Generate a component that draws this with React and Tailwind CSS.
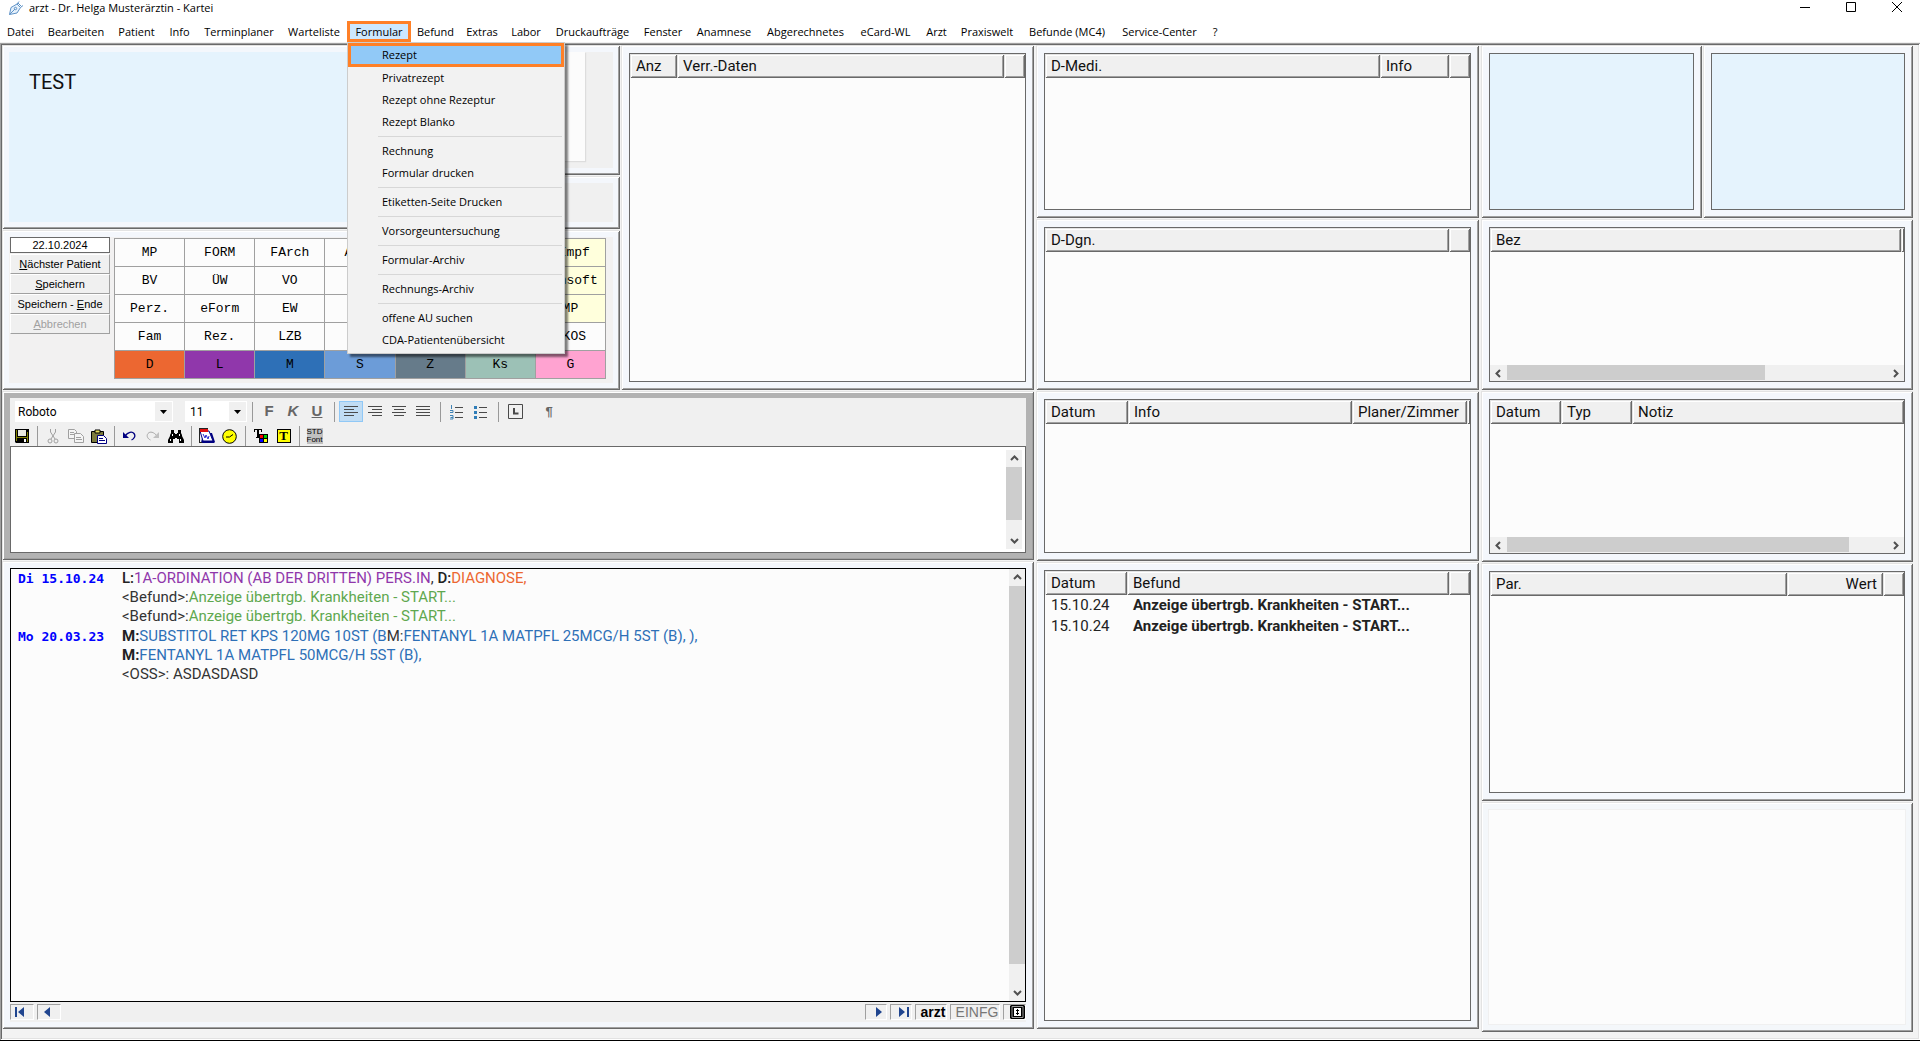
import React, { useState } from "react";
import clsx from "clsx";

// ===== Data =====
const MENU = [
  { label: "Datei", width: "w-[41px]" },
  { label: "Bearbeiten", width: "w-[70px]" },
  { label: "Patient", width: "w-[51px]" },
  { label: "Info", width: "w-[35px]" },
  { label: "Terminplaner", width: "w-[84px]" },
  { label: "Warteliste", width: "w-[66px]" },
  { label: "Formular", width: "w-[64px]" },
  { label: "Befund", width: "w-[49px]" },
  { label: "Extras", width: "w-[44px]" },
  { label: "Labor", width: "w-[44px]" },
  { label: "Druckaufträge", width: "w-[89px]" },
  { label: "Fenster", width: "w-[52px]" },
  { label: "Anamnese", width: "w-[70px]" },
  { label: "Abgerechnetes", width: "w-[93px]" },
  { label: "eCard-WL", width: "w-[67px]" },
  { label: "Arzt", width: "w-[35px]" },
  { label: "Praxiswelt", width: "w-[66px]" },
  { label: "Befunde (MC4)", width: "w-[94px]" },
  { label: "Service-Center", width: "w-[91px]" },
  { label: "?", width: "w-[20px]" },
];

const FORMULAR_GROUPS = [
  ["Rezept", "Privatrezept", "Rezept ohne Rezeptur", "Rezept Blanko"],
  ["Rechnung", "Formular drucken"],
  ["Etiketten-Seite Drucken"],
  ["Vorsorgeuntersuchung"],
  ["Formular-Archiv"],
  ["Rechnungs-Archiv"],
  ["offene AU suchen", "CDA-Patientenübersicht"],
];

const SHORTCUTS = [
  ["MP", "FORM", "FArch", "ARCH", "", "", "eImpf"],
  ["BV", "ÜW", "VO", "", "", "", "Linsoft"],
  ["Perz.", "eForm", "EW", "", "", "", "MP"],
  ["Fam", "Rez.", "LZB", "", "", "", "eKOS"],
];

const CATEGORIES = [
  { label: "D", color: "bg-[#ec6731]" },
  { label: "L", color: "bg-[#9037ab]" },
  { label: "M", color: "bg-[#2e70b7]" },
  { label: "S", color: "bg-[#6c9cd8]" },
  { label: "Z", color: "bg-[#667b8a]" },
  { label: "Ks", color: "bg-[#9cc1b6]" },
  { label: "G", color: "bg-[#ffa3d1]" },
];

const ENTRIES = [
  {
    date: "Di 15.10.24",
    lines: [
      [
        { text: "L:", style: "font-medium text-[#222]" },
        { text: "1A-ORDINATION (AB DER DRITTEN) PERS.IN", style: "text-[#9037ab]" },
        { text: ", " },
        { text: "D:", style: "font-medium text-[#222]" },
        { text: "DIAGNOSE,", style: "text-[#ec6731]" },
      ],
      [
        { text: "<Befund>:" },
        { text: "Anzeige übertrgb. Krankheiten - START...", style: "text-[#5fa84f]" },
      ],
      [
        { text: "<Befund>:" },
        { text: "Anzeige übertrgb. Krankheiten - START...", style: "text-[#5fa84f]" },
      ],
    ],
  },
  {
    date: "Mo 20.03.23",
    lines: [
      [
        { text: "M:", style: "font-bold text-[#222]" },
        { text: "SUBSTITOL RET KPS 120MG 10ST (B", style: "text-[#2e70b7]" },
        { text: "M:" },
        { text: "FENTANYL 1A MATPFL 25MCG/H 5ST (B), ),", style: "text-[#2e70b7]" },
      ],
      [
        { text: "M:", style: "font-bold text-[#222]" },
        { text: "FENTANYL 1A MATPFL 50MCG/H 5ST (B),", style: "text-[#2e70b7]" },
      ],
      [{ text: "<OSS>: ASDASDASD" }],
    ],
  },
];

// ===== Building blocks =====
const BEVEL =
  "shadow-[inset_1px_1px_0_#e3e3e3,inset_-1px_-1px_0_#696969,inset_2px_2px_0_#fff,inset_-2px_-2px_0_#a0a0a0]";

function Panel({ children, className = "bg-[#f4f7fc] p-2" }) {
  return (
    <section className={clsx("flex min-h-0 min-w-0 flex-col", BEVEL, className)}>
      {children}
    </section>
  );
}

function Arrow({ dir }) {
  const d = {
    up: "M1 6 4.5 2.5 8 6",
    down: "M1 3 4.5 6.5 8 3",
    left: "M6 1 2.5 4.5 6 8",
    right: "M3 1 6.5 4.5 3 8",
  }[dir];
  return (
    <svg width="9" height="9" viewBox="0 0 9 9" fill="none" stroke="#505050" strokeWidth="2">
      <path d={d} />
    </svg>
  );
}

// size = share of the track that the thumb takes, in percent
function VScroll({ size }) {
  return (
    <div className="flex w-4 shrink-0 flex-col bg-[#f0f0f0]">
      <button aria-label="Nach oben" className="flex h-[17px] items-center justify-center">
        <Arrow dir="up" />
      </button>
      <div className="min-h-0 flex-1">
        <div className="bg-[#cdcdcd]" style={{ height: `${size}%` }}></div>
      </div>
      <button aria-label="Nach unten" className="flex h-[17px] items-center justify-center">
        <Arrow dir="down" />
      </button>
    </div>
  );
}

function HScroll({ size }) {
  return (
    <div className="flex h-4 shrink-0 bg-[#f0f0f0]">
      <button aria-label="Nach links" className="flex w-[17px] items-center justify-center">
        <Arrow dir="left" />
      </button>
      <div className="min-w-0 flex-1">
        <div className="h-[15px] bg-[#cdcdcd]" style={{ width: `${size}%` }}></div>
      </div>
      <button aria-label="Nach rechts" className="flex w-[17px] items-center justify-center">
        <Arrow dir="right" />
      </button>
    </div>
  );
}

function ListTable({ columns, rows = [], scroll }) {
  return (
    <div className="flex min-h-0 flex-1 flex-col overflow-hidden border border-[#696969] bg-[#fcfcfc]">
      <table className="w-full table-fixed border-collapse text-[15px] text-[#111]">
        <thead>
          <tr className="h-6 bg-[#f0f0f0]">
            {columns.map((c, i) => (
              <th
                key={i}
                className={clsx(
                  "py-0 leading-[22px] font-normal whitespace-nowrap",
                  BEVEL,
                  c.label ? "px-1.5" : "px-0",
                  c.right ? "text-right" : "text-left",
                  c.width
                )}
              >
                {c.label}
              </th>
            ))}
          </tr>
        </thead>
        <tbody>
          {rows.map((row, i) => (
            <tr key={i} className="h-[21px] text-[#222]">
              <td className="px-1.5 py-0 leading-[21px]">{row[0]}</td>
              <td className="px-1.5 py-0 leading-[21px] font-bold whitespace-nowrap">
                {row[1]}
              </td>
              <td></td>
            </tr>
          ))}
        </tbody>
      </table>
      <div className="flex-1"></div>
      {scroll && <HScroll size={scroll} />}
    </div>
  );
}

// ===== Title and menu =====
function TitleBar() {
  return (
    <header className="flex h-[19px] shrink-0 items-start bg-white pl-2">
      <svg width="16" height="16" viewBox="0 0 16 16" fill="none" stroke="#5f93c8" strokeWidth="1">
        <path d="M1.5 14.5 3 7.5 9 4l3.500 3.500-3.500 5.500z" fill="#e6f1fb" />
        <path d="M1.500 14.500 7 9M9 4l2-2.500M12.500 7.500 15 5.500M10 3l3.500 3.500" />
        <circle cx="7.500" cy="8.500" r="1.200" />
      </svg>
      <h1 className="ml-[5px] flex-1 text-[11px] leading-4 text-black">
        arzt - Dr. Helga Musterärztin - Kartei
      </h1>
      <button aria-label="Minimieren" className="flex h-[14px] w-[46px] items-center justify-center">
        <svg width="10" height="10" stroke="#000"><path d="M0 5.500H10" /></svg>
      </button>
      <button aria-label="Maximieren" className="flex h-[14px] w-[46px] items-center justify-center">
        <svg width="10" height="10" fill="none" stroke="#000"><path d="M.5.5h9v9h-9z" /></svg>
      </button>
      <button aria-label="Schließen" className="flex h-[14px] w-[46px] items-center justify-center">
        <svg width="10" height="10" stroke="#000"><path d="M0 0 10 10M10 0 0 10" /></svg>
      </button>
    </header>
  );
}

function FormularMenu() {
  return (
    <div
      role="menu"
      className="absolute top-full left-0 z-10 w-[218px] border border-[#ccc] bg-[#f2f2f2] pb-0.5 shadow-[3px_3px_2px_rgba(0,0,0,0.5)]"
    >
      {FORMULAR_GROUPS.map((group, g) => (
        <div key={g}>
          {g > 0 && <hr className="my-[3px] mr-0.5 ml-[30px] border-[#d7d7d7]" />}
          {group.map((item) => (
            <button
              key={item}
              role="menuitem"
              className={clsx(
                "block w-full text-left whitespace-nowrap",
                item === "Rezept"
                  ? "h-6 border-[3px] border-[#ff8027] bg-[#91c9f7] pl-[31px] leading-[18px]"
                  : "h-[22px] pl-[34px] leading-[22px]"
              )}
            >
              {item}
            </button>
          ))}
        </div>
      ))}
    </div>
  );
}

function MenuBar() {
  const [open, setOpen] = useState("Formular");

  return (
    <nav className="flex h-6 shrink-0 items-start border-b border-[#f0f0f0] bg-white pt-0.5 text-[11px] text-black">
      {MENU.map((m) => (
        <div key={m.label} className={clsx("relative h-[21px] shrink-0", m.width)}>
          <button
            onClick={() => setOpen(open === m.label ? "" : m.label)}
            className={clsx(
              "block h-full w-full border-[3px] leading-[15px] whitespace-nowrap",
              open === m.label ? "border-[#ff8027] bg-[#cce8ff]" : "border-transparent"
            )}
          >
            <span className="-mx-1">{m.label}</span>
          </button>
          {open === m.label && m.label === "Formular" && <FormularMenu />}
        </div>
      ))}
    </nav>
  );
}

// ===== Patient area =====
function PatientArea() {
  return (
    <div className="grid min-h-0 grid-cols-[460fr_158fr]">
      <Panel className="bg-[#f4f7fc] p-[7px]">
        <div className="flex-1 bg-[#e5f3fd] px-5 py-[18px] text-xl leading-6 text-[#111]">
          TEST
        </div>
      </Panel>
      <div className="grid min-h-0 grid-rows-[130fr_53fr] gap-y-px">
        <Panel className="bg-[#f4f7fc] p-[7px]">
          <div className="flex-1 bg-[#f0f0f0] pr-7 pb-[7px]">
            <div className="h-full bg-[#fcfcfc] shadow-[1px_1px_1px_#ddd]"></div>
          </div>
        </Panel>
        <Panel className="bg-[#f4f7fc] p-[7px]">
          <div className="flex-1 bg-[#f0f0f0]"></div>
        </Panel>
      </div>
    </div>
  );
}

function ActionButton({ children, disabled }) {
  return (
    <button
      disabled={disabled}
      className="h-5 border-t border-r border-b border-l border-t-white border-r-[#a0a0a0] border-b-[#a0a0a0] border-l-white bg-[#f0f0f0] leading-[18px] disabled:text-[#a0a0a0]"
    >
      {children}
    </button>
  );
}

function Shortcuts() {
  return (
    <Panel className="bg-[#f4f7fc] p-[7px]">
      <div className="flex flex-1 gap-1 bg-[#f2f1f1] pr-[7px] pl-px">
        <div className="flex w-[100px] shrink-0 flex-col font-['Liberation_Sans',sans-serif] text-[11px] text-black">
          <input
            aria-label="Datum"
            defaultValue="22.10.2024"
            className="mb-px h-4 w-full border border-[#696969] bg-white text-center"
          />
          <ActionButton><u>N</u>ächster Patient</ActionButton>
          <ActionButton><u>S</u>peichern</ActionButton>
          <ActionButton>Speichern - <u>E</u>nde</ActionButton>
          <ActionButton disabled><u>A</u>bbrechen</ActionButton>
        </div>
        <div className="mt-px grid flex-1 auto-rows-[28px] grid-cols-7 self-start border-t border-l border-[#a0a0a0] font-['Liberation_Mono',monospace] text-[13px] text-black">
          {SHORTCUTS.map((row, r) =>
            row.map((label, c) => (
              <button
                key={`${r}-${c}`}
                className={clsx(
                  "border-r border-b border-[#a0a0a0]",
                  c === 6 && r < 3 ? "bg-[#ffffdc]" : "bg-[#fcfcfc]"
                )}
              >
                {label}
              </button>
            ))
          )}
          {CATEGORIES.map((c) => (
            <button key={c.label} className={clsx("border-r border-b border-[#a0a0a0]", c.color)}>
              {c.label}
            </button>
          ))}
        </div>
      </div>
    </Panel>
  );
}

// ===== Editor =====
function Separator({ className = "w-[10px]" }) {
  return (
    <div className={clsx("flex h-5 shrink-0 justify-center", className)}>
      <div className="w-px bg-[#999]"></div>
    </div>
  );
}

function Tool({ label, active, className = "h-[21px] w-6", children }) {
  return (
    <button
      aria-label={label}
      title={label}
      className={clsx(
        "flex shrink-0 items-center justify-center",
        active && "border border-[#90c8f6] bg-[#c0dcf3]",
        className
      )}
    >
      {children}
    </button>
  );
}

function Lines({ d }) {
  return (
    <svg width="16" height="15" viewBox="0 0 16 15" stroke="#4a4a4a">
      <path d={d} />
    </svg>
  );
}

function FormatBar() {
  return (
    <div className="flex items-center px-[5px] pt-[3px] text-[#666]">
      <select
        aria-label="Schriftart"
        className="h-[21px] w-[158px] appearance-none bg-white bg-[linear-gradient(#f0f0f0,#f0f0f0)] bg-[length:17px_19px] bg-[position:right_1px_center] bg-no-repeat pl-[3px] text-[12px] text-black"
      >
        <option>Roboto</option>
      </select>
      <Caret />
      <select
        aria-label="Schriftgröße"
        className="ml-3 h-[21px] w-[62px] appearance-none bg-white bg-[linear-gradient(#f0f0f0,#f0f0f0)] bg-[length:17px_19px] bg-[position:right_1px_center] bg-no-repeat pl-[5px] text-[12px] text-black"
      >
        <option>11</option>
      </select>
      <Caret />
      <Separator />
      <div className="flex font-['Liberation_Sans',sans-serif] text-[15px] font-bold">
        <Tool label="Fett">F</Tool>
        <Tool label="Kursiv"><i>K</i></Tool>
        <Tool label="Unterstrichen"><u>U</u></Tool>
      </div>
      <Separator />
      <Tool label="Linksbündig" active>
        <Lines d="M1 2.500H15M1 5.500H11M1 8.500H15M1 11.500H11" />
      </Tool>
      <Tool label="Rechtsbündig">
        <Lines d="M1 2.500H15M5 5.500H15M1 8.500H15M5 11.500H15" />
      </Tool>
      <Tool label="Zentriert">
        <Lines d="M1 2.500H15M3 5.500H13M1 8.500H15M3 11.500H13" />
      </Tool>
      <Tool label="Blocksatz">
        <Lines d="M1 2.500H15M1 5.500H15M1 8.500H15M1 11.500H15" />
      </Tool>
      <Separator />
      <Tool label="Nummerierung">
        <svg width="16" height="16" viewBox="0 0 16 16" stroke="#4a4a4a">
          <path d="M6 3.500H14M6 8.500H14M6 13.500H14" />
          <path d="M2.500 1V5M1 6.500H4V8.500H1M1 11.500H4V15H1M1.500 13.500H4" stroke="#3f83b5" fill="none" />
        </svg>
      </Tool>
      <Tool label="Aufzählung">
        <svg width="16" height="16" viewBox="0 0 16 16" stroke="#4a4a4a">
          <path d="M6 3.500H14M6 8.500H14M6 13.500H14" />
          <path d="M1 2h3v3H1zM1 7h3v3H1zM1 12h3v3H1z" fill="#2f7db8" stroke="none" />
        </svg>
      </Tool>
      <Separator />
      <Tool label="Tabulator">
        <svg width="15" height="15" viewBox="0 0 15 15" fill="none" stroke="#4a4a4a">
          <path d="M.5.5h14v14H.5z" />
          <path d="M6 4V9.500H10.500" strokeWidth="2" />
        </svg>
      </Tool>
      <div className="w-[10px]"></div>
      <Tool label="Absatzmarken">
        <span className="font-['Liberation_Sans',sans-serif] text-[13px] font-bold">¶</span>
      </Tool>
    </div>
  );
}

// sits over the arrow end of the select before it
function Caret() {
  return (
    <span className="pointer-events-none relative w-0">
      <svg className="absolute -top-[2px] -left-[13px]" width="7" height="4" viewBox="0 0 7 4">
        <path d="M0 0H7L3.500 4z" fill="#000" />
      </svg>
    </span>
  );
}

function IconBar() {
  const box = "h-5 w-[23px]";
  return (
    <div className="flex items-center pt-1">
      <Tool label="Speichern" className={box}>
        <svg width="14" height="14" viewBox="0 0 14 14">
          <path d="M0 0h14v14H1L0 13z" fill="#000" />
          <path d="M1 1h1v11H1zM12 3h1v10h-1zM2 8h10v1H2z" fill="#808000" />
          <path d="M3 1h8v6H3z" fill="#e8e8e0" />
          <path d="M9 10h2v3H9z" fill="#fff" />
        </svg>
      </Tool>
      <Separator className="w-2" />
      <Tool label="Ausschneiden" className={box}>
        <svg width="12" height="15" viewBox="0 0 12 15" fill="none" stroke="#a0a0a0">
          <path d="M3.500 0V3L8 10M8.500 0V3L4 10" />
          <circle cx="3" cy="12" r="2" />
          <circle cx="9" cy="12" r="2" />
        </svg>
      </Tool>
      <Tool label="Kopieren" className={box}>
        <svg width="16" height="14" viewBox="0 0 16 14" fill="#f4f4f4" stroke="#a0a0a0">
          <path d="M.5.5h6l2 2v7h-8zM2 3.500h4M2 5.500h4" />
          <path d="M6.500 4.500h6l3 3v6h-9zM8 8.500h5M8 10.500h6" />
        </svg>
      </Tool>
      <Tool label="Einfügen" className={box}>
        <svg width="16" height="15" viewBox="0 0 16 15">
          <path d="M.5 2.500h12v11H.5z" fill="#7c7a3c" stroke="#000" />
          <path d="M4 1h5v3H4z" fill="#e8e060" stroke="#000" />
          <path d="M6.500 6.500h6l3 3v5h-9z" fill="#fff" stroke="#000080" />
          <path d="M8 9.500h4M8 11.500h6" stroke="#000080" />
        </svg>
      </Tool>
      <Separator className="w-2" />
      <Tool label="Rückgängig" className={box}>
        <svg width="13" height="10" viewBox="0 0 13 10" fill="none" stroke="#000080">
          <path d="M2 5C5 1 9 0 11 2.500 13 5 11 8 8.500 9" strokeWidth="1.300" />
          <path d="M0 1v6h6z" fill="#000080" stroke="none" />
        </svg>
      </Tool>
      <Tool label="Wiederholen" className={box}>
        <svg width="13" height="10" viewBox="0 0 13 10" fill="none" stroke="#a8a8a8">
          <path d="M11 5C8 1 4 0 2 2.500 0 5 2 8 4.500 9" />
          <path d="M13 1v6H7z" fill="#c0c0c0" stroke="none" />
        </svg>
      </Tool>
      <Tool label="Suchen" className={box}>
        <svg width="16" height="13" viewBox="0 0 16 13">
          <path d="M3 0h3v3h1v1h2V3h1V0h3v3l1 2v1l2 4v3h-5V9H9V8H7v1H5v4H0v-3l2-4V5l1-2z" fill="#000" />
          <path d="M2 9h1v2H2zM4 4h1v2H4zM12 9h1v2h-1zM11 4h1v2h-1z" fill="#fff" />
        </svg>
      </Tool>
      <Separator className="w-2" />
      <Tool label="Kalender" className={box}>
        <svg width="16" height="16" viewBox="0 0 16 16">
          <path d="M2 15h13l1-1-3-9H4z" fill="#000080" />
          <path d="M1 3h9l4 10H4z" fill="#fff" stroke="#000080" />
          <path d="M1 0h8v4H1z" fill="#e01010" />
          <path d="M0 0h1v14h2v1H0zM1 0h8v1H1z" fill="#222" />
          <path d="M4 6l2 4 1-3 2 4 1-3" fill="none" stroke="#2828d0" />
        </svg>
      </Tool>
      <Tool label="Uhrzeit" className={box}>
        <svg width="15" height="15" viewBox="0 0 15 15" stroke="#000">
          <circle cx="7.500" cy="7.500" r="6.800" fill="#ff0" />
          <path d="M11 5.500 7.500 8H4" fill="none" />
        </svg>
      </Tool>
      <Separator className="w-2" />
      <Tool label="Textfarbe" className={box}>
        <svg width="14" height="14" viewBox="0 0 14 14">
          <path d="M0 0h8v3H7V1H5v7h1v1H2V8h1V1H1v2H0z" fill="#000" />
          <path d="M5 5h9v9H5z" fill="#000" />
          <path d="M6 6h3v3H6z" fill="#f00" />
          <path d="M10 6h3v3h-3z" fill="#0c0" />
          <path d="M6 10h3v3H6z" fill="#00f" />
          <path d="M10 10h3v3h-3z" fill="#ff0" />
        </svg>
      </Tool>
      <Tool label="Textmarke" className={box}>
        <span className="h-[14px] w-[14px] border border-black bg-[#ff0] font-['Liberation_Serif',serif] text-[13px] leading-3 font-bold text-black">
          T
        </span>
      </Tool>
      <Separator className="w-2" />
      <Tool label="Standardschrift" className={box}>
        <span className="flex h-4 w-4 flex-col items-center bg-[#c0c0c0] font-['Liberation_Sans',sans-serif] text-[8px] leading-2 text-black">
          <span>STD</span>
          <span>Font</span>
        </span>
      </Tool>
    </div>
  );
}

function Editor() {
  return (
    <Panel className="bg-[#b2b2b2] px-2 py-[7px]">
      <div className="h-12 shrink-0 bg-[#f0f0f0]">
        <FormatBar />
        <IconBar />
      </div>
      <div className="flex min-h-0 flex-1 border border-[#696969] bg-white py-[3px] pr-[3px]">
        <textarea aria-label="Karteitext" className="flex-1 resize-none overflow-hidden px-1 outline-none" />
        <VScroll size={82} />
      </div>
    </Panel>
  );
}

// ===== Log =====
function Log() {
  const cell =
    "flex h-4 items-center justify-center border-t border-l border-r border-b border-t-[#a0a0a0] border-l-[#a0a0a0] border-r-white border-b-white";
  return (
    <Panel className="bg-[#f4f7fc] px-2 py-[7px]">
      <div className="flex min-h-0 flex-1 border border-black bg-[#fcfcfc]">
        <div className="flex flex-1 flex-col gap-px pl-[7px]">
          {ENTRIES.map((entry) => (
            <div key={entry.date} className="flex">
              <time className="w-[104px] font-['DejaVu_Sans_Mono',monospace] text-[13px] leading-[19px] font-bold text-[#00f]">
                {entry.date}
              </time>
              <div className="text-[15px] leading-[19px] text-[#333]">
                {entry.lines.map((line, i) => (
                  <p key={i} className="whitespace-pre">
                    {line.map((part, j) => (
                      <span key={j} className={part.style}>{part.text}</span>
                    ))}
                  </p>
                ))}
              </div>
            </div>
          ))}
        </div>
        <VScroll size={95} />
      </div>
      <div className="flex h-5 shrink-0 items-center gap-[3px] bg-[#f0f0f0] font-['Liberation_Sans',sans-serif] text-[14px] leading-[14px]">
        <button aria-label="Erster Eintrag" className={clsx(cell, "w-6 pr-1")}>
          <svg width="10" height="10" fill="#20458f"><path d="M0 0h2v10H0zM9 0v10L3 5z" /></svg>
        </button>
        <button aria-label="Zurück" className={clsx(cell, "w-6 pr-1")}>
          <svg width="6" height="10" fill="#20458f"><path d="M6 0v10L0 5z" /></svg>
        </button>
        <div className="flex-1"></div>
        <button aria-label="Weiter" className={clsx(cell, "w-[22px] pl-1.5")}>
          <svg width="6" height="10" fill="#20458f"><path d="M0 0v10l6-5z" /></svg>
        </button>
        <button aria-label="Letzter Eintrag" className={clsx(cell, "w-[22px] pl-1.5")}>
          <svg width="10" height="10" fill="#20458f"><path d="M8 0h2v10H8zM0 0v10l6-5z" /></svg>
        </button>
        <span className={clsx(cell, "w-8 pl-1 font-bold text-black")}>arzt</span>
        <span className={clsx(cell, "w-[50px] pl-1 text-[#777]")}>EINFG</span>
        <button aria-label="Ansicht umschalten" className={clsx(cell, "w-[23px] pl-1.5")}>
          <svg width="15" height="14" viewBox="0 0 15 14" fill="none">
            <path d="M1 0h13l1 1v12l-1 1H1l-1-1V1z" fill="#000" />
            <path d="M2 1.500h11v11H2z" stroke="#999" />
            <path d="M4 3h7v8H4z" fill="#fff" />
            <path d="M7 4h1v6H7zM6 5h3v1H6zM6 8h3v1H6z" fill="#000" />
          </svg>
        </button>
      </div>
    </Panel>
  );
}

// ===== Page =====
export default function App() {
  return (
    <div className="flex h-screen min-h-[900px] min-w-[1280px] flex-col overflow-hidden border-b border-black bg-[#f3f3f3] font-[Roboto,sans-serif]">
      <div className="font-['Open_Sans','Noto_Sans',sans-serif]">
        <TitleBar />
        <MenuBar />
      </div>
      <main className="grid min-h-0 flex-1 grid-cols-[1032fr_443fr_432fr] gap-x-0.5 pt-0.5 pr-[7px] pl-0.5 shadow-[inset_1px_1px_0_#a0a0a0,inset_-1px_-1px_0_#fff,inset_2px_2px_0_#696969,inset_-2px_-2px_0_#e3e3e3]">
        {/* Patient, editor and log */}
        <div className="grid min-h-0 min-w-0 grid-rows-[345fr_169fr_468fr] gap-y-px pb-[11px]">
          <div className="grid min-h-0 grid-cols-[618fr_413fr] gap-x-px">
            <div className="grid min-h-0 grid-rows-[184fr_160fr] gap-y-px">
              <PatientArea />
              <Shortcuts />
            </div>
            <Panel>
              <ListTable
                columns={[
                  { label: "Anz", width: "w-[47px]" },
                  { label: "Verr.-Daten" },
                  { width: "w-[21px]" },
                ]}
              />
            </Panel>
          </div>
          <Editor />
          <Log />
        </div>

        {/* Lists */}
        <div className="grid min-h-0 min-w-0 grid-rows-[173fr_171fr_170fr_467fr] gap-y-px pb-[11px]">
          <Panel>
            <ListTable
              columns={[
                { label: "D-Medi." },
                { label: "Info", width: "w-[69px]" },
                { width: "w-[21px]" },
              ]}
            />
          </Panel>
          <Panel>
            <ListTable columns={[{ label: "D-Dgn." }, { width: "w-[21px]" }]} />
          </Panel>
          <Panel>
            <ListTable
              columns={[
                { label: "Datum", width: "w-[83px]" },
                { label: "Info" },
                { label: "Planer/Zimmer", width: "w-[115px]" },
                { width: "w-[3px]" },
              ]}
            />
          </Panel>
          <Panel>
            <ListTable
              columns={[
                { label: "Datum", width: "w-[82px]" },
                { label: "Befund" },
                { width: "w-[21px]" },
              ]}
              rows={[
                ["15.10.24", "Anzeige übertrgb. Krankheiten - START..."],
                ["15.10.24", "Anzeige übertrgb. Krankheiten - START..."],
              ]}
            />
          </Panel>
        </div>

        {/* Documents, notes and parameters */}
        <div className="grid min-h-0 min-w-0 grid-rows-[173fr_171fr_171fr_238fr_230fr] gap-y-px pb-2">
          <div className="grid min-h-0 grid-cols-[221fr_210fr] gap-x-px">
            <Panel>
              <div className="flex-1 border border-[#696969] bg-[#e5f3fd]"></div>
            </Panel>
            <Panel>
              <div className="flex-1 border border-[#696969] bg-[#e5f3fd]"></div>
            </Panel>
          </div>
          <Panel>
            <ListTable columns={[{ label: "Bez" }, { width: "w-[3px]" }]} scroll={68} />
          </Panel>
          <Panel>
            <ListTable
              columns={[
                { label: "Datum", width: "w-[71px]" },
                { label: "Typ", width: "w-[71px]" },
                { label: "Notiz" },
              ]}
              scroll={90}
            />
          </Panel>
          <Panel>
            <ListTable
              columns={[
                { label: "Par." },
                { label: "Wert", width: "w-[96px]", right: true },
                { width: "w-[21px]" },
              ]}
            />
          </Panel>
          <Panel className="bg-[#f4f7fa] p-[7px]">
            <div className="flex-1 border border-[#f0f0f0] bg-[#fcfcfc]"></div>
          </Panel>
        </div>
      </main>
    </div>
  );
}
